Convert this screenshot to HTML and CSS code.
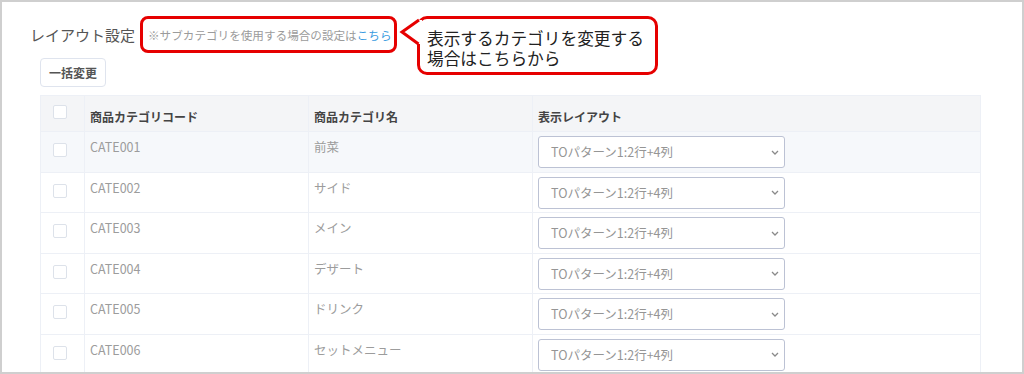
FILE: index.html
```html
<!DOCTYPE html>
<html lang="ja">
<head>
<meta charset="utf-8">
<title>レイアウト設定</title>
<link rel="stylesheet" href="styles.css">
</head>
<body>
<div class="frame">
  <div class="head">
    <h2 class="title">レイアウト設定</h2>
    <p class="note">※サブカテゴリを使用する場合の設定は<a class="link">こちら</a></p>
  </div>
  <div class="callout"><span class="cl">表示するカテゴリを変更する</span><span class="cl">場合はこちらから</span><svg class="tail" width="24" height="30" viewBox="0 0 24 30"><polygon points="23,2 20,2 3,14 19.5,26 23,26" fill="#fff"/><polyline points="20,2 3,14 19.5,26" fill="none" stroke="#e60000" stroke-width="3" stroke-linejoin="miter"/></svg></div>
  <div class="body">
    <button class="btn">一括変更</button>
    <table class="tbl">
      <colgroup><col class="c1"><col class="c2"><col class="c3"><col class="c4"></colgroup>
      <thead>
        <tr class="hrow">
          <th class="chk"><span class="cb"></span></th>
          <th>商品カテゴリコード</th>
          <th>商品カテゴリ名</th>
          <th>表示レイアウト</th>
        </tr>
      </thead>
      <tbody>
        <tr class="row hover">
          <td class="chk"><span class="cb"></span></td>
          <td>CATE001</td><td>前菜</td>
          <td class="sel"><div class="select"><span>TOパターン1:2行+4列</span><svg width="8" height="5" viewBox="0 0 8 5"><path d="M1 1 L4 4 L7 1" fill="none" stroke="#8a8a8a" stroke-width="1.3"/></svg></div></td>
        </tr>
        <tr class="row">
          <td class="chk"><span class="cb"></span></td>
          <td>CATE002</td><td>サイド</td>
          <td class="sel"><div class="select"><span>TOパターン1:2行+4列</span><svg width="8" height="5" viewBox="0 0 8 5"><path d="M1 1 L4 4 L7 1" fill="none" stroke="#8a8a8a" stroke-width="1.3"/></svg></div></td>
        </tr>
        <tr class="row">
          <td class="chk"><span class="cb"></span></td>
          <td>CATE003</td><td>メイン</td>
          <td class="sel"><div class="select"><span>TOパターン1:2行+4列</span><svg width="8" height="5" viewBox="0 0 8 5"><path d="M1 1 L4 4 L7 1" fill="none" stroke="#8a8a8a" stroke-width="1.3"/></svg></div></td>
        </tr>
        <tr class="row">
          <td class="chk"><span class="cb"></span></td>
          <td>CATE004</td><td>デザート</td>
          <td class="sel"><div class="select"><span>TOパターン1:2行+4列</span><svg width="8" height="5" viewBox="0 0 8 5"><path d="M1 1 L4 4 L7 1" fill="none" stroke="#8a8a8a" stroke-width="1.3"/></svg></div></td>
        </tr>
        <tr class="row">
          <td class="chk"><span class="cb"></span></td>
          <td>CATE005</td><td>ドリンク</td>
          <td class="sel"><div class="select"><span>TOパターン1:2行+4列</span><svg width="8" height="5" viewBox="0 0 8 5"><path d="M1 1 L4 4 L7 1" fill="none" stroke="#8a8a8a" stroke-width="1.3"/></svg></div></td>
        </tr>
        <tr class="row">
          <td class="chk"><span class="cb"></span></td>
          <td>CATE006</td><td>セットメニュー</td>
          <td class="sel"><div class="select"><span>TOパターン1:2行+4列</span><svg width="8" height="5" viewBox="0 0 8 5"><path d="M1 1 L4 4 L7 1" fill="none" stroke="#8a8a8a" stroke-width="1.3"/></svg></div></td>
        </tr>
      </tbody>
    </table>
  </div>
</div>
</body>
</html>
```

FILE: styles.css
```css
html, body {
  margin: 0;
  padding: 0;
  background: #fff;
}
body {
  font-family: "Noto Sans CJK JP", "Noto Sans", sans-serif;
}
.frame {
  width: 1024px;
  height: 374px;
  box-sizing: border-box;
  border: 2px solid #cfcfcf;
  position: relative;
  overflow: hidden;
  background: #fff;
}
.head {
  display: flex;
  align-items: center;
  padding: 14px 0 0 28px;
  height: 37px;
}
.title {
  margin: 0 5px 0 0;
  font-size: 15px;
  font-weight: 400;
  color: #555;
  line-height: 20px;
}
.note {
  margin: 0;
  height: 37px;
  box-sizing: border-box;
  border: 3px solid #e60000;
  border-radius: 8px;
  padding: 0 2px 0 5px;
  display: flex;
  align-items: center;
  font-size: 11.6px;
  color: #9b9b9b;
  white-space: nowrap;
}
.link {
  color: #3a9be0;
}
.callout {
  position: absolute;
  left: 415px;
  top: 14px;
  width: 241px;
  height: 59px;
  box-sizing: border-box;
  border: 3px solid #e60000;
  border-radius: 10px;
  padding: 11px 0 0 7px;
  font-size: 16.7px;
  color: #222;
  background: #fff;
  white-space: nowrap;
}
.cl {
  display: block;
  height: 20px;
  line-height: 16px;
}
.tail {
  position: absolute;
  left: -21px;
  top: -1px;
}
.body {
  padding: 5px 0 0 38px;
}
.btn {
  display: block;
  width: 66px;
  height: 29px;
  border: 1px solid #dfe4ee;
  border-radius: 4px;
  background: #fff;
  font-family: "Noto Sans CJK JP", sans-serif;
  font-weight: 700;
  font-size: 12px;
  color: #555;
  padding: 0;
}
.tbl {
  margin-top: 8px;
  width: 940px;
  border-collapse: collapse;
  table-layout: fixed;
}
.c1 { width: 44px; }
.c2 { width: 224px; }
.c3 { width: 224px; }
.c4 { width: 448px; }
.tbl th,
.tbl td {
  border: 1px solid #edf0f6;
  vertical-align: top;
  text-align: left;
  line-height: 20px;
}
.hrow {
  height: 36px;
  background: #f4f5f7;
}
.tbl th {
  padding: 11px 5px 0;
  font-size: 12px;
  font-weight: 700;
  color: #444;
}
.tbl th.chk {
  padding: 9px 0 0 12px;
}
.row {
  height: 40.5px;
}
.row.hover {
  background: #f6f8fb;
}
.tbl td {
  padding: 5px 5px 0;
  font-size: 12.5px;
  color: #9c9c9c;
}
.tbl td.chk {
  padding: 11px 0 0 12px;
}
.tbl td.sel {
  padding: 4px 5px 0;
}
.cb {
  display: block;
  width: 14px;
  height: 14px;
  box-sizing: border-box;
  border: 1px solid #dde2ea;
  border-radius: 2px;
  background: #fff;
}
.select {
  width: 247px;
  height: 32px;
  box-sizing: border-box;
  border: 1px solid #bcc2d4;
  border-radius: 3px;
  background: #fff;
  display: flex;
  align-items: center;
  justify-content: space-between;
  padding: 0 5px 0 12px;
  font-size: 12.5px;
  color: #959595;
}
```
